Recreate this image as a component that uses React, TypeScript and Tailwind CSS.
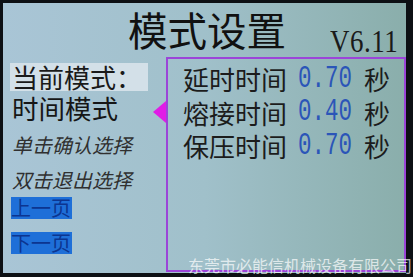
import React from "react";

function Row({ label, value }: { label: string; value: string }) {
  return (
    <div className="flex items-center h-[33.5px]">
      <span className="font-['Noto_Sans_CJK_SC',sans-serif] text-[26px] leading-[33px] text-[#1c1c1c] w-[104px] whitespace-nowrap">
        {label}
      </span>
      <span className="ml-[11px] inline-block scale-y-[1.4] font-['Liberation_Mono',monospace] text-[22.5px] leading-[20px] text-[#2b55b8] w-[54px] whitespace-nowrap">
        {value}
      </span>
      <span className="ml-[12px] font-['Noto_Sans_CJK_SC',sans-serif] text-[26px] leading-[33px] text-[#1c1c1c]">
        秒
      </span>
    </div>
  );
}

export default function App() {
  return (
    <div className="relative w-[413px] h-[277px] bg-[#0d1014] overflow-hidden pl-[3px] pt-[3px] pr-[7px] pb-[4px] font-['Noto_Sans_CJK_SC',sans-serif]">
      <div className="w-full h-full flex flex-col bg-linear-to-r from-[#a9c5d6] via-[#a0c0ca] to-[#8aaeab]">
        {/* header */}
        <div className="h-[54px] flex items-start shrink-0">
          <div className="ml-[125px] text-[39.5px] leading-[52px] text-[#111] whitespace-nowrap">
            模式设置
          </div>
          <div className="ml-[44px] mt-[27px] inline-block scale-y-[1.2] font-['Liberation_Serif',serif] text-[27px] leading-[22px] tracking-[0.5px] text-[#1a1a1a] whitespace-nowrap">
            V6.11
          </div>
        </div>
        {/* body */}
        <div className="flex flex-1 min-h-0 pb-[1px]">
          <div className="w-[150px] flex flex-col items-start pl-[7px]">
            <div className="mt-[6px] h-[28px] w-[138px] bg-[#d3e0e8] text-[26px] leading-[28px] text-[#1a1a1a] pl-[2px] whitespace-nowrap">
              当前模式：
            </div>
            <div className="mt-[3px] text-[26.5px] leading-[28px] text-[#161616] pl-[2px]">
              时间模式
            </div>
            <div className="mt-[11px] text-[20px] leading-[24px] italic text-[#303030] pl-[2px]">
              单击确认选择
            </div>
            <div className="mt-[11px] text-[20px] leading-[24px] italic text-[#303030] pl-[2px]">
              双击退出选择
            </div>
            <div className="mt-[5px] ml-[1px] h-[22px] w-[61px] bg-[#1e6fd8] text-[20px] leading-[22px] text-[#0c3590] whitespace-nowrap">
              上一页
            </div>
            <div className="mt-[13px] ml-[1px] h-[22px] w-[61px] bg-[#1e6fd8] text-[20px] leading-[22px] text-[#0c3590] whitespace-nowrap">
              下一页
            </div>
          </div>
          <div className="w-[13px] shrink-0">
            <svg className="mt-[44px]" width="13" height="22" viewBox="0 0 13 22">
              <polygon points="13,0 13,22 0,11" fill="#e01ce6" />
            </svg>
          </div>
          <div className="flex-1 border-2 border-[#9b45d8] pl-[15px] pt-[3px]">
            <Row label="延时时间" value="0.70" />
            <Row label="熔接时间" value="0.40" />
            <Row label="保压时间" value="0.70" />
          </div>
        </div>
      </div>
      <div className="absolute left-[188px] top-[255px] text-[16px] leading-[20px] text-white/70 whitespace-nowrap">
        东莞市必能信机械设备有限公司
      </div>
    </div>
  );
}
